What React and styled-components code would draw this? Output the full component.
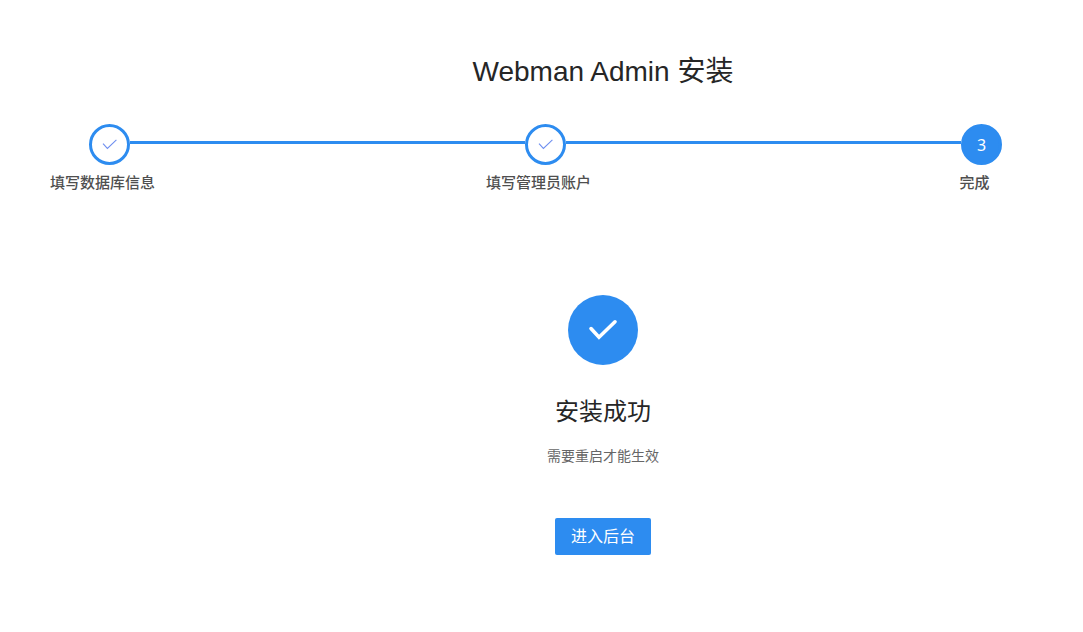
import React from "react"
import styled, { createGlobalStyle, css } from "styled-components"

const colors = {
  blue: "#2d8cf0",
  white: "#fff",
  title: "#262626",
  text: "#4f4f4f",
  muted: "#666",
}

const GlobalStyle = createGlobalStyle`
  * {
    box-sizing: border-box;
  }
  body {
    margin: 0;
    background: ${colors.white};
    font-family: "Liberation Sans", "Noto Sans CJK SC", sans-serif;
  }
`

const Page = styled.main`
  padding: 51px 0;
`

const Title = styled.h1`
  margin: 0;
  padding-left: 123px;
  color: ${colors.title};
  font-size: 28px;
  font-weight: 400;
  line-height: 42px;
  text-align: center;
`

const Steps = styled.ol`
  display: flex;
  margin: 31px 0 0;
  padding: 0 56px 0 50px;
  list-style: none;
`

const StepItem = styled.li`
  flex: 1;

  &:last-child {
    flex: none;
  }
`

const StepHead = styled.div`
  display: flex;
  align-items: center;
`

const Line = styled.span`
  flex: ${props => (props.$lead ? "0 0 39px" : "1")};
  height: 3px;
  margin-bottom: 4px;
  background: ${props => (props.$filled ? colors.blue : "transparent")};
`

const Circle = styled.span`
  display: flex;
  flex: none;
  align-items: center;
  justify-content: center;
  width: 41px;
  height: 41px;
  border: 3px solid ${colors.blue};
  border-radius: 50%;
  color: ${colors.blue};
  font-family: "Noto Sans", sans-serif;
  font-size: 16px;
  line-height: 20px;

  ${props =>
    props.$current &&
    css`
      background: ${colors.blue};
      color: ${colors.white};
    `}
`

const StepLabel = styled.div`
  width: 105px;
  margin-top: 7px;
  color: ${colors.text};
  font-size: 15px;
  font-weight: 500;
  line-height: 22px;
  text-align: center;
  white-space: nowrap;
`

const Result = styled.section`
  display: flex;
  flex-direction: column;
  align-items: center;
  margin-top: 101px;
  padding-left: 123px;
`

const Badge = styled.div`
  display: flex;
  align-items: center;
  justify-content: center;
  width: 70px;
  height: 70px;
  border-radius: 50%;
  background: ${colors.blue};
`

const ResultTitle = styled.h2`
  margin: 29px 0 0;
  color: ${colors.title};
  font-size: 24px;
  font-weight: 400;
  line-height: 36px;
`

const ResultText = styled.p`
  margin: 15px 0 0;
  color: ${colors.muted};
  font-size: 14px;
  line-height: 22px;
`

const EnterButton = styled.button`
  height: 37px;
  margin-top: 51px;
  padding: 0 16px;
  border: none;
  border-radius: 2px;
  background: ${colors.blue};
  color: ${colors.white};
  font-family: inherit;
  font-size: 16px;
  line-height: 22px;
  cursor: pointer;
`

const StepCheck = () => (
  <svg width="16" height="12" viewBox="0 0 16 12" fill="none" aria-hidden="true">
    <path d="M1 4.6 L5.4 9.4 L14.4 0.8" stroke="#6f8ff0" strokeWidth="1.1" />
  </svg>
)

const BadgeCheck = () => (
  <svg width="30" height="24" viewBox="0 0 30 24" fill="none" aria-hidden="true">
    <path
      d="M3 10.6 L11 19.2 L27 3.8"
      stroke="#fff"
      strokeWidth="3.6"
      strokeLinecap="round"
    />
  </svg>
)

const steps = ["填写数据库信息", "填写管理员账户", "完成"]
const current = 2

const App = () => (
  <>
    <GlobalStyle />
    <Page>
      <Title>Webman Admin 安装</Title>
      <Steps>
        {steps.map((label, i) => (
          <StepItem key={label} aria-current={i === current ? "step" : undefined}>
            <StepHead>
              <Line $lead $filled={i > 0} />
              <Circle $current={i === current}>
                {i < current ? <StepCheck /> : i + 1}
              </Circle>
              {i < steps.length - 1 && <Line $filled />}
            </StepHead>
            <StepLabel>{label}</StepLabel>
          </StepItem>
        ))}
      </Steps>
      <Result>
        <Badge>
          <BadgeCheck />
        </Badge>
        <ResultTitle>安装成功</ResultTitle>
        <ResultText>需要重启才能生效</ResultText>
        <EnterButton type="button">进入后台</EnterButton>
      </Result>
    </Page>
  </>
)

export default App
